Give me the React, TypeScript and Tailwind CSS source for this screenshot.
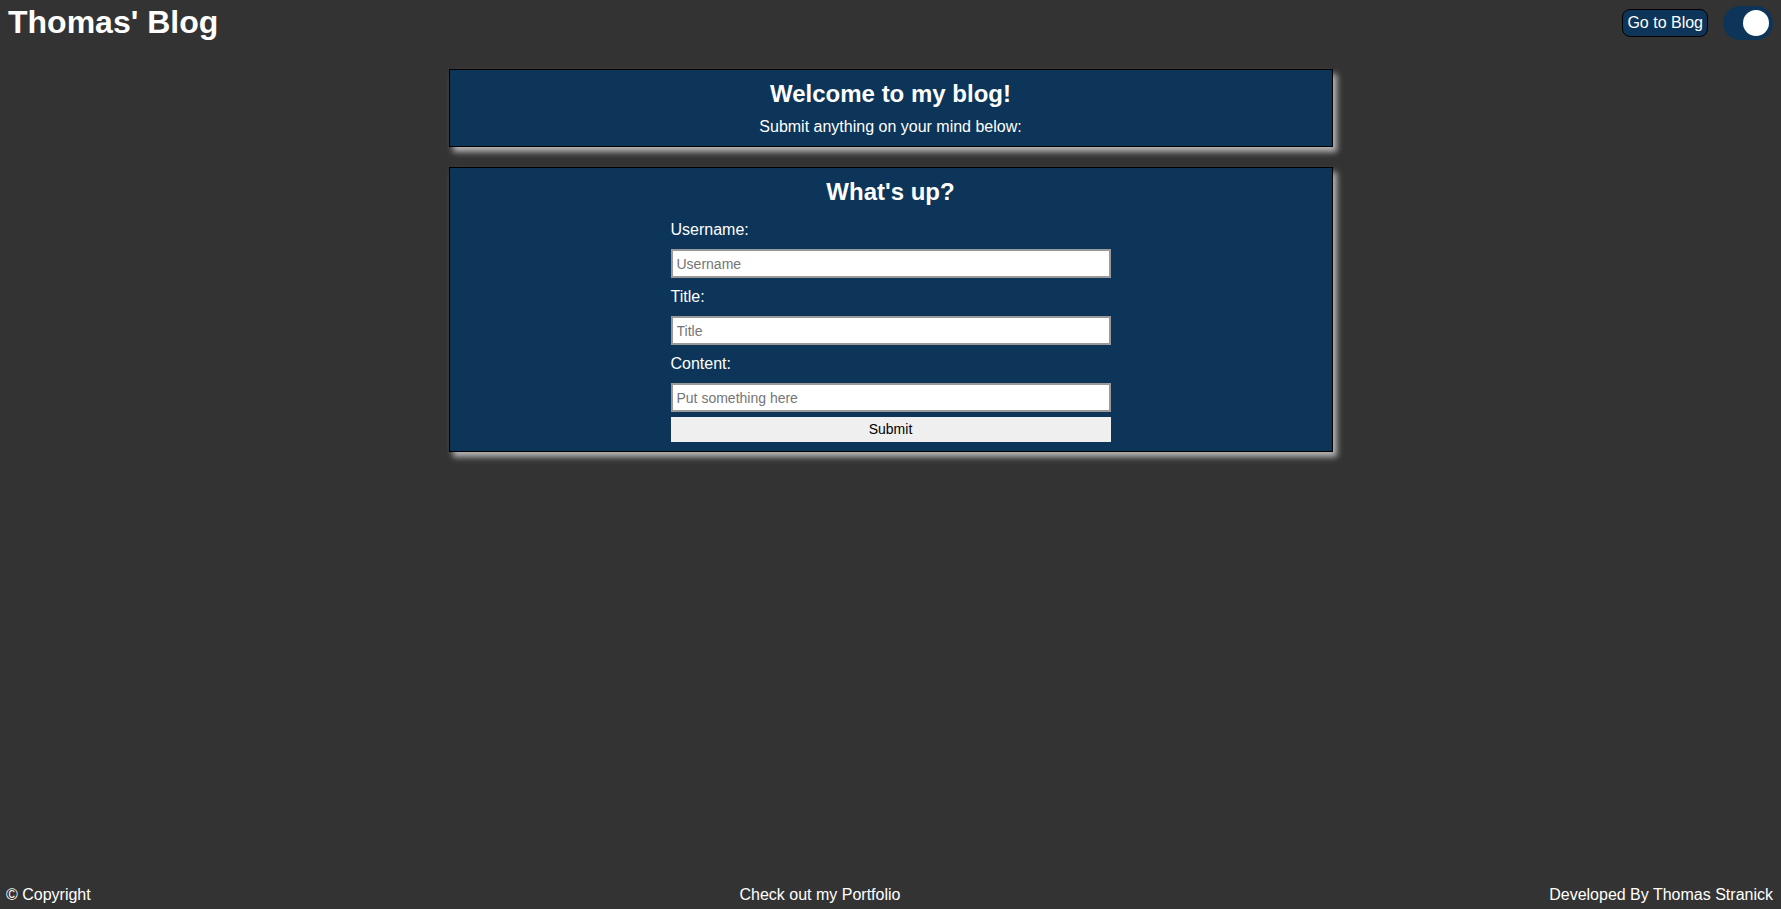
export default function App() {
    return (
        <div
            className="h-screen overflow-hidden flex flex-col bg-[#333333] text-white"
            style={{ fontFamily: '"Liberation Sans", Arial, sans-serif' }}
        >
            {/* Header */}
            <header className="h-[45px] shrink-0 px-2 flex items-center justify-between">
                <h1 className="text-[32px] font-bold leading-[37px]">Thomas' Blog</h1>
                <div className="flex items-center gap-[15px]">
                    <button className="h-[28px] px-1 rounded-lg border border-black bg-[#0c3559] text-white text-[16px] leading-none">
                        Go to Blog
                    </button>
                    <div className="w-[50px] h-[34px] rounded-full bg-[#0c3559] flex items-center justify-end pr-[4px]">
                        <div className="w-[26px] h-[26px] rounded-full bg-white" />
                    </div>
                </div>
            </header>

            <main className="flex-1 flex flex-col items-center pt-[24px] gap-[20px]">
                {/* Welcome card */}
                <section className="w-[884px] bg-[#0c3559] border border-black shadow-[4px_5px_6px_#b5b5b5] p-[10px] text-center">
                    <h2 className="text-[24px] font-bold leading-[28px]">Welcome to my blog!</h2>
                    <p className="mt-[10px] text-[16px] leading-[18px]">Submit anything on your mind below:</p>
                </section>

                {/* Form card */}
                <section className="w-[884px] bg-[#0c3559] border border-black shadow-[4px_5px_6px_#b5b5b5] pt-[10px] pb-[9px]">
                    <h2 className="text-[24px] font-bold leading-[28px] text-center">What's up?</h2>
                    <form className="w-[440px] mx-auto mt-[5px] flex flex-col" onSubmit={(e) => e.preventDefault()}>
                        <label className="my-[10px] text-[16px] leading-[18px]">Username:</label>
                        <input
                            placeholder="Username"
                            className="h-[29px] bg-white border-2 border-[#999999] px-[4px] text-[14px] text-black placeholder:text-[#757575] outline-none"
                        />
                        <label className="my-[10px] text-[16px] leading-[18px]">Title:</label>
                        <input
                            placeholder="Title"
                            className="h-[29px] bg-white border-2 border-[#999999] px-[4px] text-[14px] text-black placeholder:text-[#757575] outline-none"
                        />
                        <label className="my-[10px] text-[16px] leading-[18px]">Content:</label>
                        <input
                            placeholder="Put something here"
                            className="h-[29px] bg-white border-2 border-[#999999] px-[4px] text-[14px] text-black placeholder:text-[#757575] outline-none"
                        />
                        <button className="mt-[5px] h-[25px] bg-[#efefef] text-black text-[14px]">Submit</button>
                    </form>
                </section>
            </main>

            {/* Footer */}
            <footer className="shrink-0 flex justify-between pl-[6px] pr-[8px] pb-[5px] text-[16px] leading-[18px]">
                <span>© Copyright</span>
                <span>Check out my Portfolio</span>
                <span>Developed By Thomas Stranick</span>
            </footer>
        </div>
    );
}
